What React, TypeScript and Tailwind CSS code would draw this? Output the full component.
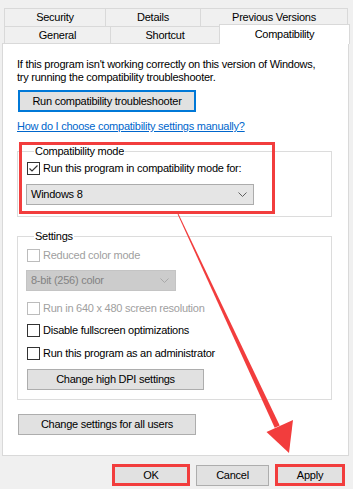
import React from 'react';

const font = { fontFamily: '"Liberation Sans", Arial, sans-serif' };

function Check({ checked = false, disabled = false }: { checked?: boolean; disabled?: boolean }) {
  return (
    <span
      className={`w-[13px] h-[13px] shrink-0 border bg-white flex items-center justify-center ${
        disabled ? 'border-[#bcbcbc]' : 'border-[#333333]'
      }`}
    >
      {checked && (
        <svg width="11" height="11" viewBox="0 0 11 11">
          <polyline points="1.5,5.5 4,8 9.5,2.5" fill="none" stroke="#333" strokeWidth="1.2" />
        </svg>
      )}
    </span>
  );
}

function CheckRow({ label, checked, disabled }: { label: string; checked?: boolean; disabled?: boolean }) {
  return (
    <div className="flex items-center h-[13px] gap-[3px] ml-[1px]">
      <Check checked={checked} disabled={disabled} />
      <span className={disabled ? 'text-[#a0a0a0]' : 'text-black'}>{label}</span>
    </div>
  );
}

function Chevron({ color }: { color: string }) {
  return (
    <svg width="9" height="5" viewBox="0 0 9 5">
      <polyline points="0.5,0.5 4.5,4.5 8.5,0.5" fill="none" stroke={color} strokeWidth="1" />
    </svg>
  );
}

function Btn({ label, className = '' }: { label: string; className?: string }) {
  return (
    <div className={`h-[21px] bg-[#e1e1e1] border border-[#adadad] flex items-center justify-center ${className}`}>
      {label}
    </div>
  );
}

export default function App() {
  return (
    <div
      className="relative w-[353px] h-[489px] bg-[#f0f0f0] overflow-hidden text-[11px] leading-[13px] tracking-[-0.25px] text-black whitespace-nowrap"
      style={font}
    >
      {/* Tabs */}
      <div className="pt-[8px]">
        <div className="flex pl-[4px] h-[18px]">
          <div className="w-[102px] border border-[#d9d9d9] border-b-0 flex items-center justify-center">Security</div>
          <div className="w-[96px] -ml-px border border-[#d9d9d9] border-b-0 flex items-center justify-center">Details</div>
          <div className="w-[148px] -ml-px border border-[#d9d9d9] border-b-0 flex items-center justify-center">Previous Versions</div>
        </div>
        <div className="flex pl-[4px] h-[17px] items-end">
          <div className="w-[107px] h-[17px] border border-[#d9d9d9] border-b-0 flex items-center justify-center">General</div>
          <div className="w-[110px] h-[17px] -ml-px border border-[#d9d9d9] border-b-0 flex items-center justify-center">Shortcut</div>
          <div className="relative z-10 w-[131px] h-[20px] -ml-px -mb-px bg-white border border-[#d9d9d9] border-b-0 flex items-start pt-[3px] justify-center">
            Compatibility
          </div>
        </div>
      </div>

      {/* Panel */}
      <div className="ml-[2px] w-[347px] bg-white border border-[#d9d9d9] pt-[14px] pl-[14px] pr-[16px] pb-[20px]">
        <p>
          If this program isn't working correctly on this version of Windows,
          <br />
          try running the compatibility troubleshooter.
        </p>
        <div className="mt-[6px] ml-[1px] w-[178px] h-[22px] border-2 border-[#0078d7] bg-[#e1e1e1] flex items-center justify-center">
          Run compatibility troubleshooter
        </div>
        <div className="mt-[8px] text-[#0066cc] underline">How do I choose compatibility settings manually?</div>

        <fieldset className="mt-[12px] border border-[#dcdcdc] pl-[8px] pr-[8px] pb-[11px]">
          <legend className="ml-[8px] px-[1px]">Compatibility mode</legend>
          <div className="mt-[4px]">
            <CheckRow label="Run this program in compatibility mode for:" checked />
          </div>
          <div className="mt-[9px] w-[228px] h-[21px] bg-[#e5e5e5] border border-[#acacac] flex items-center justify-between pl-[4px] pr-[6px]">
            <span>Windows 8</span>
            <Chevron color="#606060" />
          </div>
        </fieldset>

        <fieldset className="mt-[13px] border border-[#dcdcdc] pl-[8px] pr-[8px] pb-[9px]">
          <legend className="ml-[8px] px-[1px]">Settings</legend>
          <div className="mt-[6px]">
            <CheckRow label="Reduced color mode" disabled />
          </div>
          <div className="mt-[8px] w-[150px] h-[21px] bg-[#cccccc] border border-[#c4c4c4] flex items-center justify-between pl-[4px] pr-[6px] text-[#838383]">
            <span>8-bit (256) color</span>
            <Chevron color="#a8a8a8" />
          </div>
          <div className="mt-[11px]">
            <CheckRow label="Run in 640 x 480 screen resolution" disabled />
          </div>
          <div className="mt-[9px]">
            <CheckRow label="Disable fullscreen optimizations" />
          </div>
          <div className="mt-[10px]">
            <CheckRow label="Run this program as an administrator" />
          </div>
          <Btn label="Change high DPI settings" className="mt-[9px] ml-[1px] w-[177px]" />
        </fieldset>

        <Btn label="Change settings for all users" className="mt-[14px] ml-[1px] w-[178px]" />
      </div>

      {/* Dialog buttons */}
      <div className="flex justify-end gap-[6px] pr-[8px] mt-[8px] items-start">
        <div className="w-[78px] h-[22px] border-[3px] border-[#f23d3d] bg-[#e1e1e1] flex items-center justify-center">OK</div>
        <Btn label="Cancel" className="w-[73px] mt-[1px]" />
        <div className="w-[70px] h-[22px] border-[3px] border-[#f23d3d] bg-[#e1e1e1] flex items-center justify-center">Apply</div>
      </div>

      {/* Annotation: red highlight and arrow */}
      <div className="absolute left-[19px] top-[142px] w-[256px] h-[72px] border-[3px] border-[#f23d3d] pointer-events-none" />
      <svg className="absolute left-0 top-0 pointer-events-none" width="353" height="489" viewBox="0 0 353 489">
        <polygon points="178.4,213.8 177.6,214.2 274.7,427.8 279.7,425.4" fill="#f23d3d" />
        <polygon points="289,453 266.5,432 293,420" fill="#f23d3d" />
      </svg>
    </div>
  );
}
